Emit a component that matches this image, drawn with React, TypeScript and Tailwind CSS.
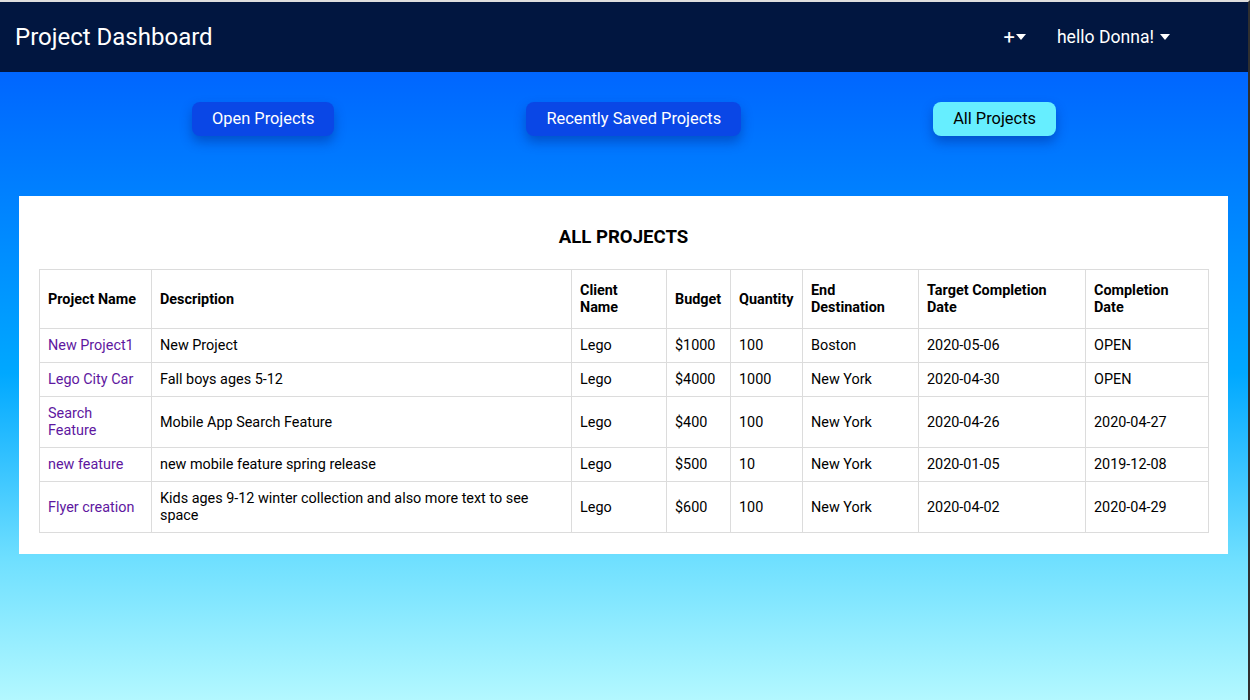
import { ReactNode } from 'react';

const projects = [
    { name: 'New Project1', description: 'New Project', client: 'Lego', budget: '$1000', quantity: '100', destination: 'Boston', target: '2020-05-06', completion: 'OPEN' },
    { name: 'Lego City Car', description: 'Fall boys ages 5-12', client: 'Lego', budget: '$4000', quantity: '1000', destination: 'New York', target: '2020-04-30', completion: 'OPEN' },
    { name: 'Search Feature', description: 'Mobile App Search Feature', client: 'Lego', budget: '$400', quantity: '100', destination: 'New York', target: '2020-04-26', completion: '2020-04-27' },
    { name: 'new feature', description: 'new mobile feature spring release', client: 'Lego', budget: '$500', quantity: '10', destination: 'New York', target: '2020-01-05', completion: '2019-12-08' },
    { name: 'Flyer creation', description: 'Kids ages 9-12 winter collection and also more text to see space', client: 'Lego', budget: '$600', quantity: '100', destination: 'New York', target: '2020-04-02', completion: '2020-04-29' },
];

const columns = [
    { label: 'Project Name', width: 'w-[112px]' },
    { label: 'Description', width: 'w-[420px]' },
    { label: 'Client Name', width: 'w-[95px]' },
    { label: 'Budget', width: 'w-[64px]' },
    { label: 'Quantity', width: 'w-[72px]' },
    { label: 'End Destination', width: 'w-[116px]' },
    { label: 'Target Completion Date', width: 'w-[167px]' },
    { label: 'Completion Date', width: 'w-[123px]' },
];

function Caret() {
    return (
        <svg width="10" height="6" viewBox="0 0 10 6" className="inline-block">
            <path d="M0 0 L10 0 L5 6 Z" fill="currentColor" />
        </svg>
    );
}

function Cell({ children }: { children: ReactNode }) {
    return <td className="border border-[#dcdcdc] px-2 py-2 align-middle">{children}</td>;
}

export default function App() {
    return (
        <div className="min-h-screen flex flex-col border-t-2 border-[#dedede] border-r-2 border-r-[#2f2f2f] font-['Roboto',sans-serif]">
            <header className="h-[70px] bg-[#011640] flex items-center justify-between pl-[15px] pr-[78px] text-white">
                <h1 className="text-[24px] leading-none">Project Dashboard</h1>
                <div className="flex items-center gap-[31px] text-[17.6px]">
                    <span className="flex items-center gap-[1px] text-[20px]">
                        +<Caret />
                    </span>
                    <span className="flex items-center gap-[6px]">
                        hello Donna! <Caret />
                    </span>
                </div>
            </header>

            <main className="flex-1 bg-[linear-gradient(180deg,#0066ff_0%,#00a8ff_48%,#70e0ff_78%,#b3f8ff_100%)]">
                <div className="flex justify-evenly pt-[30px] text-[16.4px]">
                    <button className="h-[34px] px-[20px] pt-[1px] rounded-lg bg-[#0a47e6] text-white shadow-[0_6px_12px_rgba(0,40,140,0.45)]">
                        Open Projects
                    </button>
                    <button className="h-[34px] px-[20px] pt-[1px] rounded-lg bg-[#0a47e6] text-white shadow-[0_6px_12px_rgba(0,40,140,0.45)]">
                        Recently Saved Projects
                    </button>
                    <button className="h-[34px] px-[20px] pt-[1px] rounded-lg bg-[#66eeff] text-black shadow-[0_6px_12px_rgba(0,40,140,0.45)]">
                        All Projects
                    </button>
                </div>

                <section className="mt-[60px] ml-[19px] mr-[20px] bg-white px-[20px] pt-[31px] pb-[21px]">
                    <h2 className="text-center font-bold text-[18.6px] leading-[21px] mb-[21px]">ALL PROJECTS</h2>
                    <table className="w-full table-fixed border-collapse text-[14.4px] leading-[17px] text-black">
                        <thead>
                            <tr>
                                {columns.map((c) => (
                                    <td key={c.label} className={`border border-[#dcdcdc] px-2 py-3 font-bold ${c.width}`}>
                                        {c.label}
                                    </td>
                                ))}
                            </tr>
                        </thead>
                        <tbody>
                            {projects.map((p) => (
                                <tr key={p.name}>
                                    <Cell>
                                        <a className="text-[#5e17a0] cursor-pointer">{p.name}</a>
                                    </Cell>
                                    <Cell>{p.description}</Cell>
                                    <Cell>{p.client}</Cell>
                                    <Cell>{p.budget}</Cell>
                                    <Cell>{p.quantity}</Cell>
                                    <Cell>{p.destination}</Cell>
                                    <Cell>{p.target}</Cell>
                                    <Cell>{p.completion}</Cell>
                                </tr>
                            ))}
                        </tbody>
                    </table>
                </section>
            </main>
        </div>
    );
}
